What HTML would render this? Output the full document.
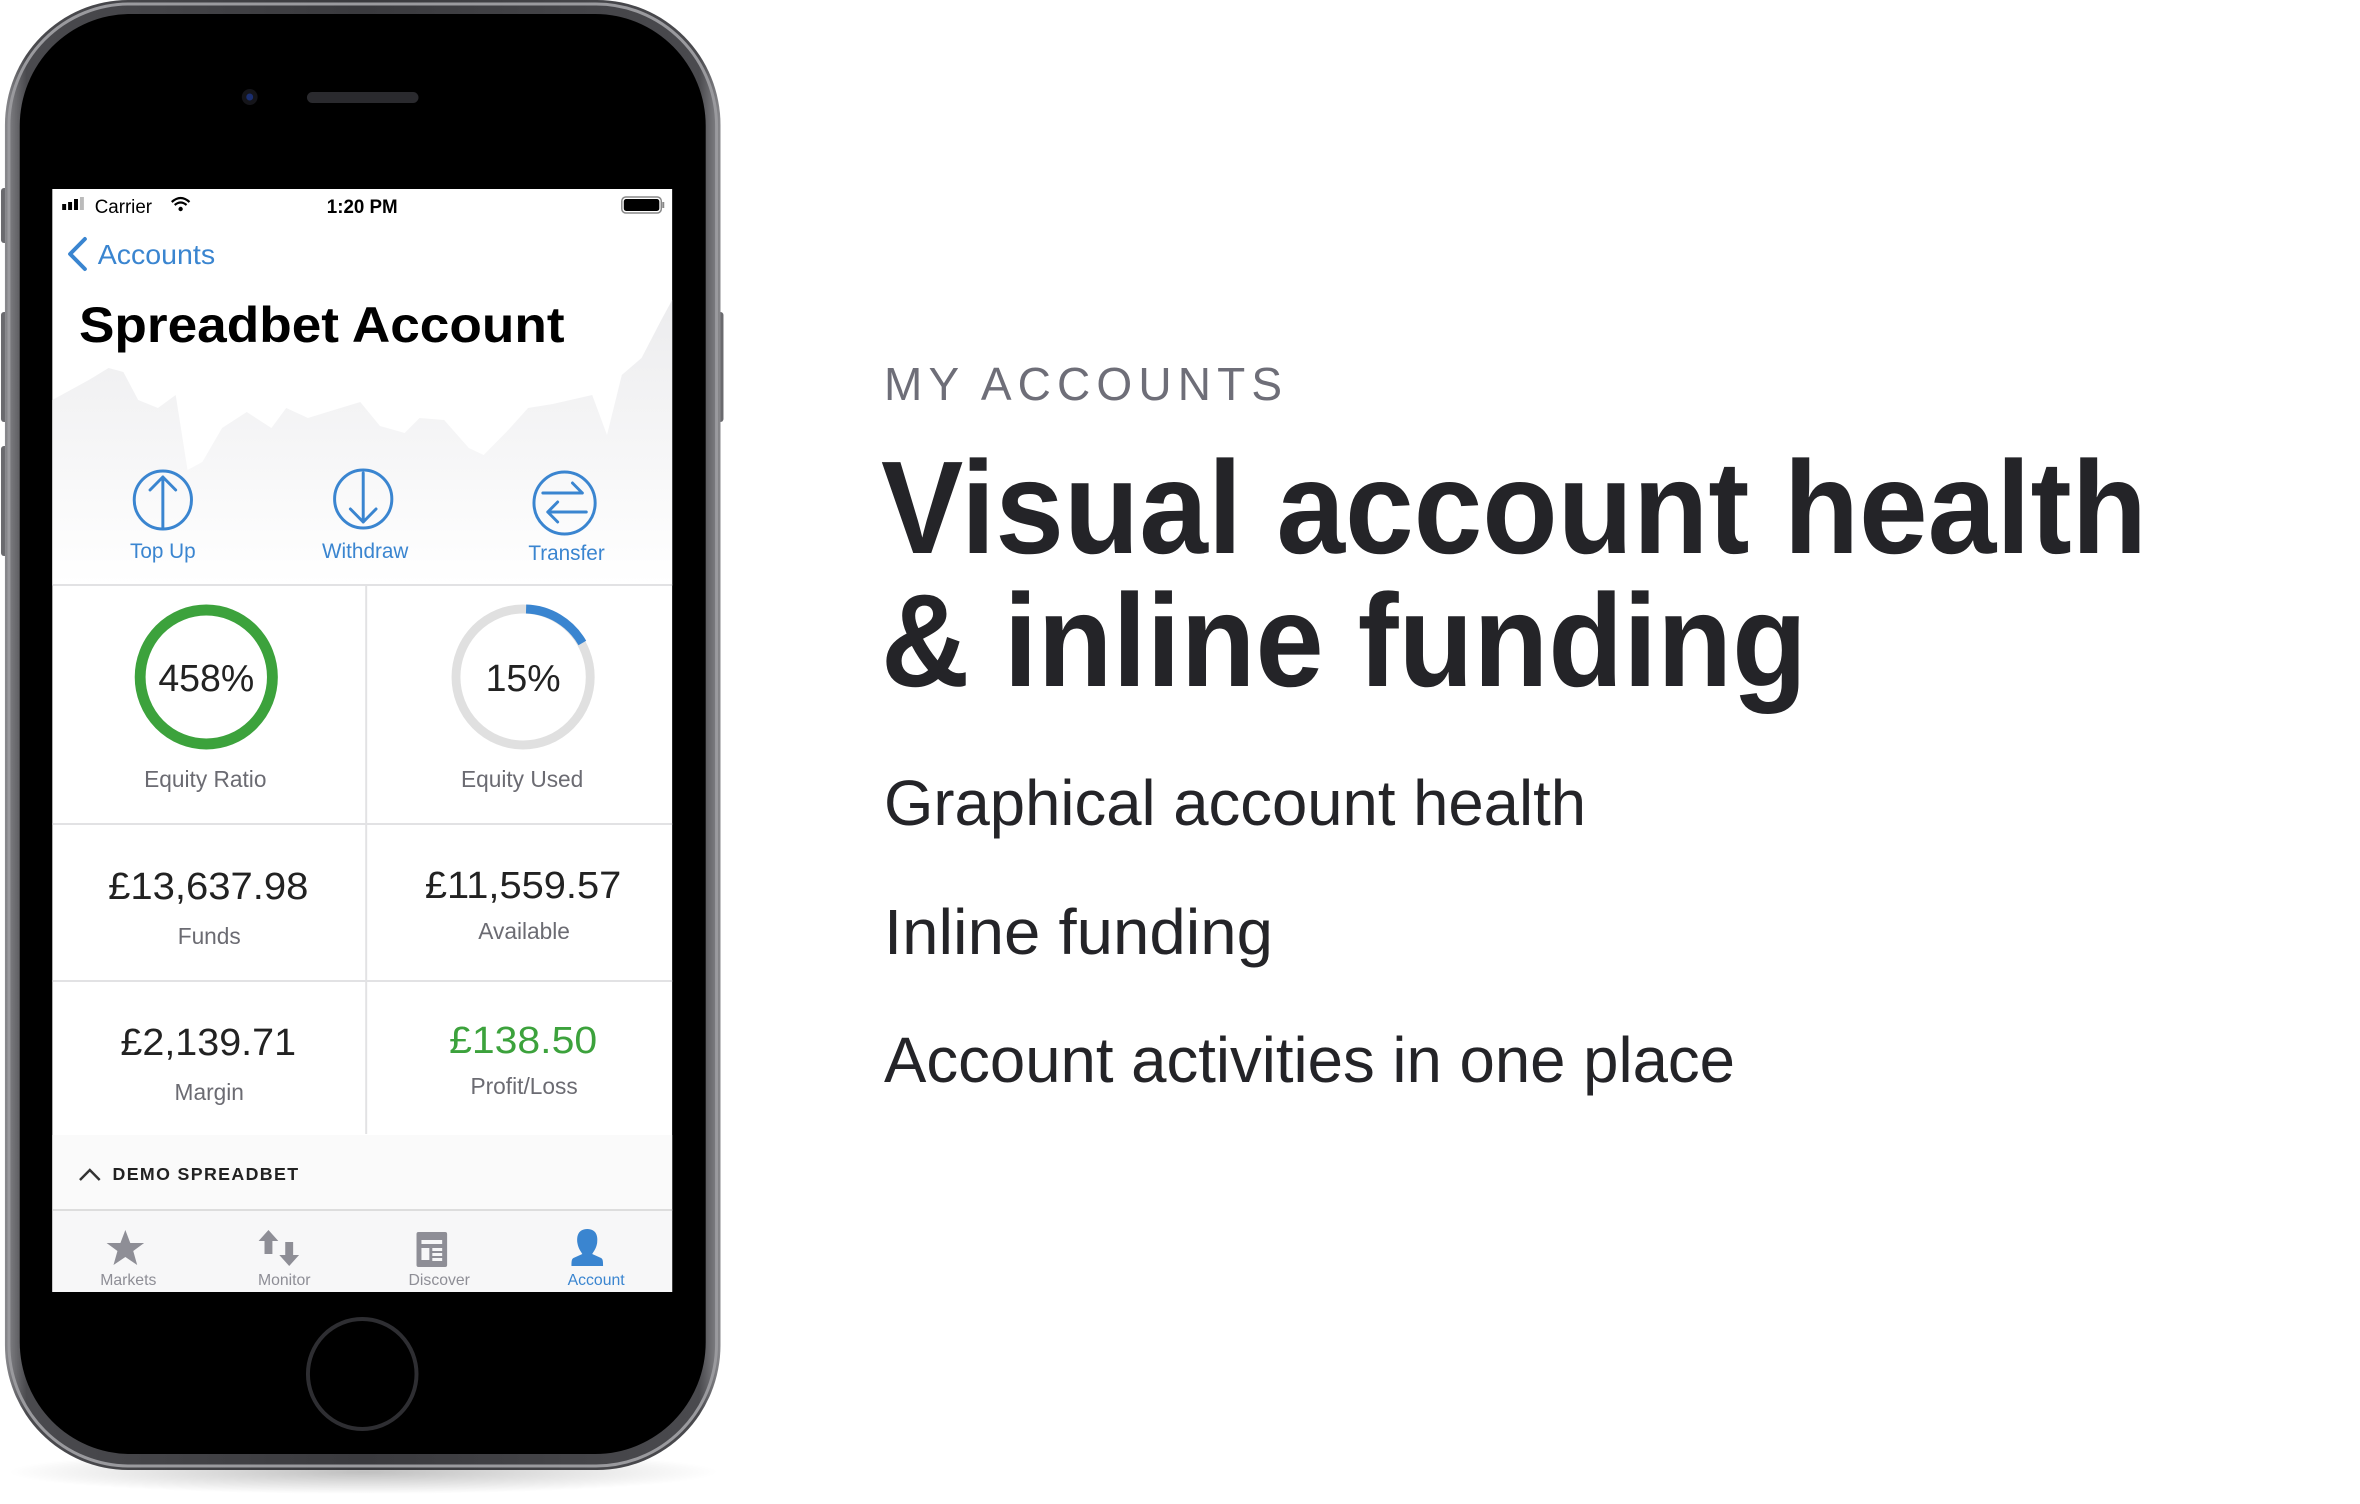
<!DOCTYPE html>
<html><head><meta charset="utf-8"><style>
html,body{margin:0;padding:0;background:#fff;}
svg{display:block;}
text{font-family:"Liberation Sans",sans-serif;}
</style></head><body>
<svg width="2360" height="1504" viewBox="0 0 2360 1504" xmlns="http://www.w3.org/2000/svg">
<defs>
<linearGradient id="frame" x1="0" y1="0" x2="1" y2="0">
<stop offset="0" stop-color="#8a8a8e"/><stop offset="0.03" stop-color="#4a4a4e"/><stop offset="0.5" stop-color="#3a3a3e"/><stop offset="0.97" stop-color="#4a4a4e"/><stop offset="1" stop-color="#8a8a8e"/>
</linearGradient>
<linearGradient id="chart" x1="0" y1="0" x2="0" y2="1">
<stop offset="0" stop-color="#ececee"/><stop offset="1" stop-color="#ffffff"/>
</linearGradient>
<radialGradient id="shadow" cx="0.5" cy="0.5" r="0.5">
<stop offset="0" stop-color="#000" stop-opacity="0.25"/><stop offset="1" stop-color="#000" stop-opacity="0"/>
</radialGradient>
</defs>
<rect width="2360" height="1504" fill="#fff"/>
<g transform="scale(0.987,1)">
<ellipse cx="368" cy="1472" rx="360" ry="22" fill="url(#shadow)"/>
<rect x="1" y="188" width="8" height="55" rx="3" fill="#6a6a6e"/>
<rect x="1" y="312" width="8" height="110" rx="3" fill="#6a6a6e"/>
<rect x="1" y="446" width="8" height="110" rx="3" fill="#6a6a6e"/>
<rect x="725" y="312" width="8" height="110" rx="3" fill="#6a6a6e"/>
<rect x="5" y="0" width="725" height="1470" rx="125" fill="url(#frame)"/>
<rect x="9" y="4" width="717" height="1462" rx="122" fill="none" stroke="#9a9a9e" stroke-width="3"/>
<rect x="20" y="14" width="695" height="1440" rx="112" fill="#000"/>
<circle cx="253" cy="97" r="8" fill="#15151a"/><circle cx="253" cy="97" r="3.5" fill="#1a2e70"/>
<rect x="311" y="92" width="113" height="11" rx="5.5" fill="#2a2a2e"/>
<circle cx="367" cy="1374" r="55" fill="#000" stroke="#2e2e32" stroke-width="4"/>
<rect x="53" y="189" width="628" height="1103" fill="#fff"/>
<path d="M53 400 L90 380 L110 368 L125 372 L140 400 L160 408 L178 395 L190 470 L205 462 L225 428 L250 412 L275 428 L290 408 L312 418 L345 408 L365 402 L385 426 L410 433 L425 418 L450 420 L475 448 L490 455 L515 430 L535 408 L560 404 L600 395 L615 435 L630 375 L650 358 L670 320 L681 300 L681 585 L53 585 Z" fill="url(#chart)"/>
<rect x="63" y="204" width="4" height="6" fill="#000"/><rect x="69" y="202" width="4" height="8" fill="#000"/><rect x="75" y="199" width="4" height="11" fill="#000"/><rect x="81" y="197" width="4" height="13" fill="#bbb"/>
<text x="96" y="213" font-size="19" fill="#000">Carrier</text>
<path d="M174 202 Q183 194 192 202 M177 205 Q183 200 189 205" stroke="#000" stroke-width="2.2" fill="none"/><circle cx="183" cy="209" r="2.2" fill="#000"/>
<text x="367" y="213" font-size="19" font-weight="bold" text-anchor="middle" fill="#000">1:20 PM</text>
<rect x="630" y="197" width="40" height="16" rx="4" fill="none" stroke="#888" stroke-width="1.5"/><rect x="632" y="199" width="36" height="12" rx="2.5" fill="#000"/><rect x="671" y="202" width="2" height="6" fill="#888"/>
<path d="M86 239 L71 254 L86 269" stroke="#3a85d0" stroke-width="4" fill="none" stroke-linecap="round" stroke-linejoin="round"/>
<text x="99" y="264" font-size="28" fill="#3a85d0" textLength="119" lengthAdjust="spacingAndGlyphs">Accounts</text>
<text x="80" y="342" font-size="50" font-weight="bold" fill="#000" textLength="492" lengthAdjust="spacingAndGlyphs">Spreadbet Account</text>
<g stroke="#3a85d0" stroke-width="3" fill="none" stroke-linecap="round" stroke-linejoin="round">
<circle cx="165" cy="500" r="29"/><path d="M165 527 V477 M152 490 L165 477 L178 490"/>
<circle cx="368" cy="499" r="29"/><path d="M368 473 V522 M355 509 L368 522 L381 509"/>
<circle cx="572" cy="503" r="31"/><path d="M550 493 H590 M580 483 L590 493 M594 512 H555 M565 502 L555 512 L565 522"/>
</g>
<g font-size="21" fill="#3a85d0" text-anchor="middle">
<text x="165" y="558">Top Up</text><text x="370" y="558">Withdraw</text><text x="574" y="560">Transfer</text>
</g>
<g stroke="#e2e2e4" stroke-width="2">
<line x1="53" y1="585" x2="681" y2="585"/><line x1="371" y1="585" x2="371" y2="1134"/>
<line x1="53" y1="824" x2="681" y2="824"/><line x1="53" y1="981" x2="681" y2="981"/>
</g>
<circle cx="209" cy="677" r="67" fill="none" stroke="#3ca23c" stroke-width="11"/>
<text x="209" y="691" font-size="38" fill="#222" text-anchor="middle">458%</text>
<circle cx="530" cy="677" r="68" fill="none" stroke="#e0e0e0" stroke-width="9"/>
<path d="M533 609 A68 68 0 0 1 590 643" fill="none" stroke="#3a85d0" stroke-width="9"/>
<text x="530" y="691" font-size="38" fill="#222" text-anchor="middle">15%</text>
<g font-size="23" fill="#6b6b72" text-anchor="middle">
<text x="208" y="787">Equity Ratio</text><text x="529" y="787">Equity Used</text>
<text x="212" y="944">Funds</text><text x="531" y="939">Available</text>
<text x="212" y="1100">Margin</text><text x="531" y="1094">Profit/Loss</text>
</g>
<g font-size="38" fill="#222" text-anchor="middle">
<text x="211" y="899" textLength="203" lengthAdjust="spacingAndGlyphs">£13,637.98</text>
<text x="530" y="898" textLength="199" lengthAdjust="spacingAndGlyphs">£11,559.57</text>
<text x="211" y="1055" textLength="178" lengthAdjust="spacingAndGlyphs">£2,139.71</text>
<text x="530" y="1053" fill="#3ca23c" textLength="150" lengthAdjust="spacingAndGlyphs">£138.50</text>
</g>
<rect x="53" y="1135" width="628" height="75" fill="#fafafa"/>
<path d="M81 1180 L91 1170 L101 1180" stroke="#333" stroke-width="2.5" fill="none"/>
<text x="114" y="1180" font-size="18" font-weight="bold" fill="#222" textLength="188" lengthAdjust="spacing">DEMO SPREADBET</text>
<rect x="53" y="1210" width="628" height="82" fill="#f7f7f8"/>
<line x1="53" y1="1210" x2="681" y2="1210" stroke="#ddd" stroke-width="2"/>
<path d="M127 1230 L132 1243 L146 1243 L135 1251 L139 1265 L127 1257 L115 1265 L119 1251 L108 1243 L122 1243 Z" fill="#8e8e96"/>
<path d="M272 1230 L262 1241 H268 V1254 H276 V1241 H282 Z M293 1266 L303 1255 H297 V1242 H289 V1255 H283 Z" fill="#8e8e96"/>
<rect x="422" y="1232" width="31" height="35" rx="2" fill="#8e8e96"/>
<rect x="427" y="1240" width="21" height="4" fill="#f7f7f8"/><rect x="427" y="1248" width="8" height="12" fill="#f7f7f8"/><rect x="438" y="1248" width="10" height="3" fill="#f7f7f8"/><rect x="438" y="1253" width="10" height="3" fill="#f7f7f8"/><rect x="438" y="1258" width="10" height="3" fill="#f7f7f8"/>
<path d="M595 1229 C586 1229 584 1236 585 1243 C586 1249 589 1252 590 1254 L581 1258 C579 1259 579 1262 579 1266 H611 C611 1262 611 1259 609 1258 L600 1254 C601 1252 604 1249 605 1243 C606 1236 604 1229 595 1229 Z" fill="#3a85d0"/>
<g font-size="16" text-anchor="middle" fill="#8e8e96">
<text x="130" y="1285">Markets</text><text x="288" y="1285">Monitor</text><text x="445" y="1285">Discover</text><text x="604" y="1285" fill="#3a85d0">Account</text>
</g>
</g>
<text x="884" y="400" font-size="46" fill="#6e6e78" textLength="398" lengthAdjust="spacing">MY ACCOUNTS</text>
<text x="881" y="553" font-size="132" font-weight="bold" fill="#242428" textLength="1266" lengthAdjust="spacingAndGlyphs">Visual account health</text>
<text x="881" y="686" font-size="132" font-weight="bold" fill="#242428" textLength="926" lengthAdjust="spacingAndGlyphs">&amp; inline funding</text>
<g font-size="64" fill="#242428">
<text x="884" y="825" textLength="702" lengthAdjust="spacingAndGlyphs">Graphical account health</text>
<text x="884" y="954" textLength="389" lengthAdjust="spacingAndGlyphs">Inline funding</text>
<text x="884" y="1082" textLength="851" lengthAdjust="spacingAndGlyphs">Account activities in one place</text>
</g>
</svg>
</body></html>
